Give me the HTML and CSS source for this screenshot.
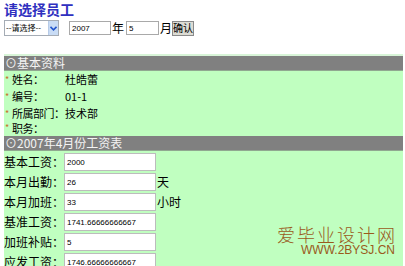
FILE: index.html
```html
<!DOCTYPE html>
<html lang="zh-CN">
<head>
<meta charset="utf-8">
<title>请选择员工</title>
<link rel="stylesheet" href="styles.css">
</head>
<body>
<h1 class="title">请选择员工</h1>
<form class="picker">
  <span class="select-box">
    <select class="select"><option>--请选择--</option></select>
    <span class="select-btn"><svg width="7" height="5" viewBox="0 0 7 5"><path d="M0.5 0.8 L3.5 3.8 L6.5 0.8" fill="none" stroke="#2255cc" stroke-width="1.6"/></svg></span>
  </span>
  <input class="field year" type="text" value="2007">
  <span class="unit">年</span>
  <input class="field month" type="text" value="5">
  <span class="unit">月</span><button class="btn" type="button">确认</button>
</form>

<div class="panel">
  <div class="head">⊙基本资料</div>
  <div class="info">
    <div class="row"><span class="lbl"><i class="star">*</i>姓名：</span><span class="val">杜皓蕾</span></div>
    <div class="row"><span class="lbl"><i class="star">*</i>编号：</span><span class="val">01-1</span></div>
    <div class="row mid"><span class="lbl"><i class="star">*</i>所属部门：</span><span class="val">技术部</span></div>
    <div class="row short"><span class="lbl"><i class="star">*</i>职务：</span><span class="val"></span></div>
  </div>
  <div class="head">⊙2007年4月份工资表</div>
  <div class="pay">
    <div class="prow"><span class="plbl">基本工资：</span><input class="pin" type="text" value="2000"></div>
    <div class="prow"><span class="plbl">本月出勤：</span><input class="pin" type="text" value="26"><span class="punit">天</span></div>
    <div class="prow"><span class="plbl">本月加班：</span><input class="pin" type="text" value="33"><span class="punit">小时</span></div>
    <div class="prow"><span class="plbl">基准工资：</span><input class="pin" type="text" value="1741.66666666667"></div>
    <div class="prow"><span class="plbl">加班补贴：</span><input class="pin" type="text" value="5"></div>
    <div class="prow"><span class="plbl">应发工资：</span><input class="pin" type="text" value="1746.66666666667"></div>
  </div>
  <div class="mark">
    <div class="mark-cn">爱毕业设计网</div>
    <div class="mark-en">WWW.2BYSJ.CN</div>
  </div>
</div>
</body>
</html>
```

FILE: styles.css
```css
html, body {
  margin: 0;
  padding: 0;
  background: #ffffff;
  overflow: hidden;
}
body {
  font-family: "Noto Sans CJK SC", "Liberation Sans", sans-serif;
  font-size: 12px;
  color: #000;
  height: 266px;
}
.title {
  margin: 0;
  padding: 1px 0 0 4px;
  height: 18px;
  font-size: 14px;
  line-height: 17px;
  font-weight: bold;
  color: #3030c0;
}
.picker {
  display: flex;
  align-items: center;
  margin: 0 0 0 4px;
  height: 18px;
}
.select-box {
  display: inline-flex;
  align-items: stretch;
  width: 55px;
  height: 16px;
  box-sizing: border-box;
  border: 1px solid #a5acb5;
  background: #fff;
}
.select {
  appearance: none;
  -webkit-appearance: none;
  border: 0;
  outline: 0;
  margin: 0;
  padding: 0 0 0 1px;
  width: 44px;
  font-family: "Noto Sans CJK SC", sans-serif;
  font-size: 8px;
  line-height: 14px;
  background: transparent;
  color: #000;
}
.select-btn {
  display: flex;
  align-items: center;
  justify-content: center;
  width: 9px;
  background: #c9dcf5;
  border-left: 1px solid #b7cbe8;
}
.field {
  box-sizing: border-box;
  height: 14px;
  border: 1px solid #a9a9a9;
  padding: 0 0 0 2px;
  font-family: "Liberation Sans", sans-serif;
  font-size: 8px;
  margin: 0;
}
.year {
  width: 42px;
  margin-left: 10px;
}
.month {
  width: 33px;
  margin-left: 2px;
}
.unit {
  font-size: 12px;
  line-height: 14px;
  margin-left: 1px;
}
.btn {
  box-sizing: border-box;
  height: 15px;
  width: 22px;
  padding: 0;
  margin: 0;
  border: 1px solid #8a8a8a;
  background: #dcdcd4;
  font-family: "Noto Sans CJK SC", sans-serif;
  font-size: 10px;
  line-height: 12px;
  color: #000;
}
.panel {
  position: relative;
  margin: 17px 2px 0 4px;
  background: #c0ffc0;
  border-top: 2px solid #d8f5d8;
  height: 220px;
}
.head {
  height: 14px;
  background: #808080;
  color: #f4f4f4;
  font-size: 12px;
  line-height: 14px;
  padding-left: 1px;
  border-bottom: 1px solid #90a890;
  white-space: nowrap;
}
.info {
  display: flex;
  flex-direction: column;
}
.row {
  display: flex;
  align-items: center;
  height: 17px;
  line-height: 15px;
  white-space: nowrap;
}
.row.mid {
  height: 16px;
}
.row.short {
  height: 15px;
  line-height: 14px;
  align-items: flex-start;
}
.lbl {
  width: 61px;
  flex: none;
  display: flex;
  align-items: center;
  font-size: 11px;
  letter-spacing: -0.5px;
}
.star {
  font-style: normal;
  color: #c8702a;
  font-size: 9px;
  width: 7px;
  padding-left: 1px;
  flex: none;
}
.val {
  font-size: 11px;
}
.pay {
  display: flex;
  flex-direction: column;
  gap: 2px;
  padding-top: 2px;
}
.prow {
  display: flex;
  align-items: center;
  height: 18px;
  line-height: 16px;
  white-space: nowrap;
}
.plbl {
  width: 60px;
  flex: none;
}
.pin {
  box-sizing: border-box;
  width: 92px;
  height: 18px;
  margin: 0;
  border: 1px solid #bcbcbc;
  background: #fff;
  padding: 0 0 0 2px;
  font-family: "Liberation Sans", sans-serif;
  font-size: 8px;
}
.punit {
  padding-left: 1px;
  font-size: 12px;
}
.mark {
  position: absolute;
  right: 6px;
  top: 168px;
  color: #9a5a1c;
  text-align: right;
}
.mark-cn {
  font-family: "Noto Sans CJK SC", serif;
  font-size: 18px;
  line-height: 21px;
  letter-spacing: 2px;
  font-weight: 300;
}
.mark-en {
  font-family: "Liberation Sans", sans-serif;
  font-size: 12px;
  line-height: 11px;
  margin-right: 2px;
}
```
